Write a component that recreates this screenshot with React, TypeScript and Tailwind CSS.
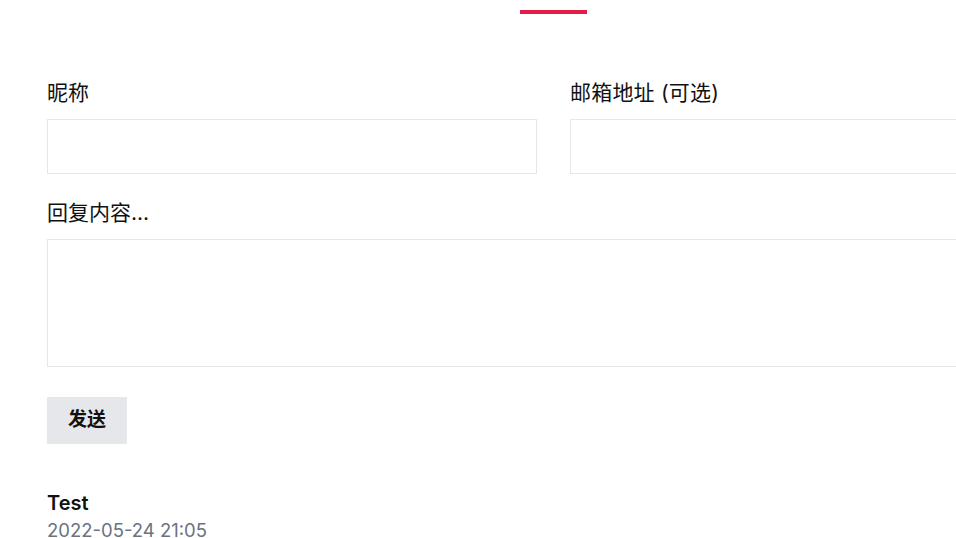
export default function App() {
  return (
    <div className="w-[956px] h-[538px] overflow-hidden bg-white text-[#111] font-['Inter','Noto_Sans_CJK_SC',sans-serif]">
      {/* 顶部红色指示条 */}
      <div className="flex justify-center pl-[151px] pt-[10px]">
        <div className="w-[67px] h-[4px] bg-[#e11d48]" />
      </div>

      <div className="w-[1013px] ml-[47px] mt-[65px]">
        <div className="grid grid-cols-2 gap-x-[33px]">
          <div>
            <label className="block text-[21px] leading-[28px] h-[28px]">昵称</label>
            <input className="mt-[12px] block w-full h-[55px] border border-[#e5e7eb] outline-none" />
          </div>
          <div>
            <label className="block text-[21px] leading-[28px] h-[28px] tracking-[0.2px]">邮箱地址 (可选)</label>
            <input className="mt-[12px] block w-full h-[55px] border border-[#e5e7eb] outline-none" />
          </div>
        </div>

        <label className="block mt-[25px] text-[21px] leading-[28px] h-[28px]">回复内容...</label>
        <textarea className="mt-[12px] block w-full h-[128px] border border-[#e5e7eb] outline-none resize-none" />

        <button className="mt-[30px] w-[80px] h-[47px] bg-[#e5e7eb] text-[19px] font-bold">发送</button>

        <div className="mt-[45px]">
          <div className="text-[20px] font-semibold leading-[28px]">Test</div>
          <div className="text-[18.5px] leading-[26px] text-[#6b7280]">2022-05-24 21:05</div>
        </div>
      </div>
    </div>
  );
}
